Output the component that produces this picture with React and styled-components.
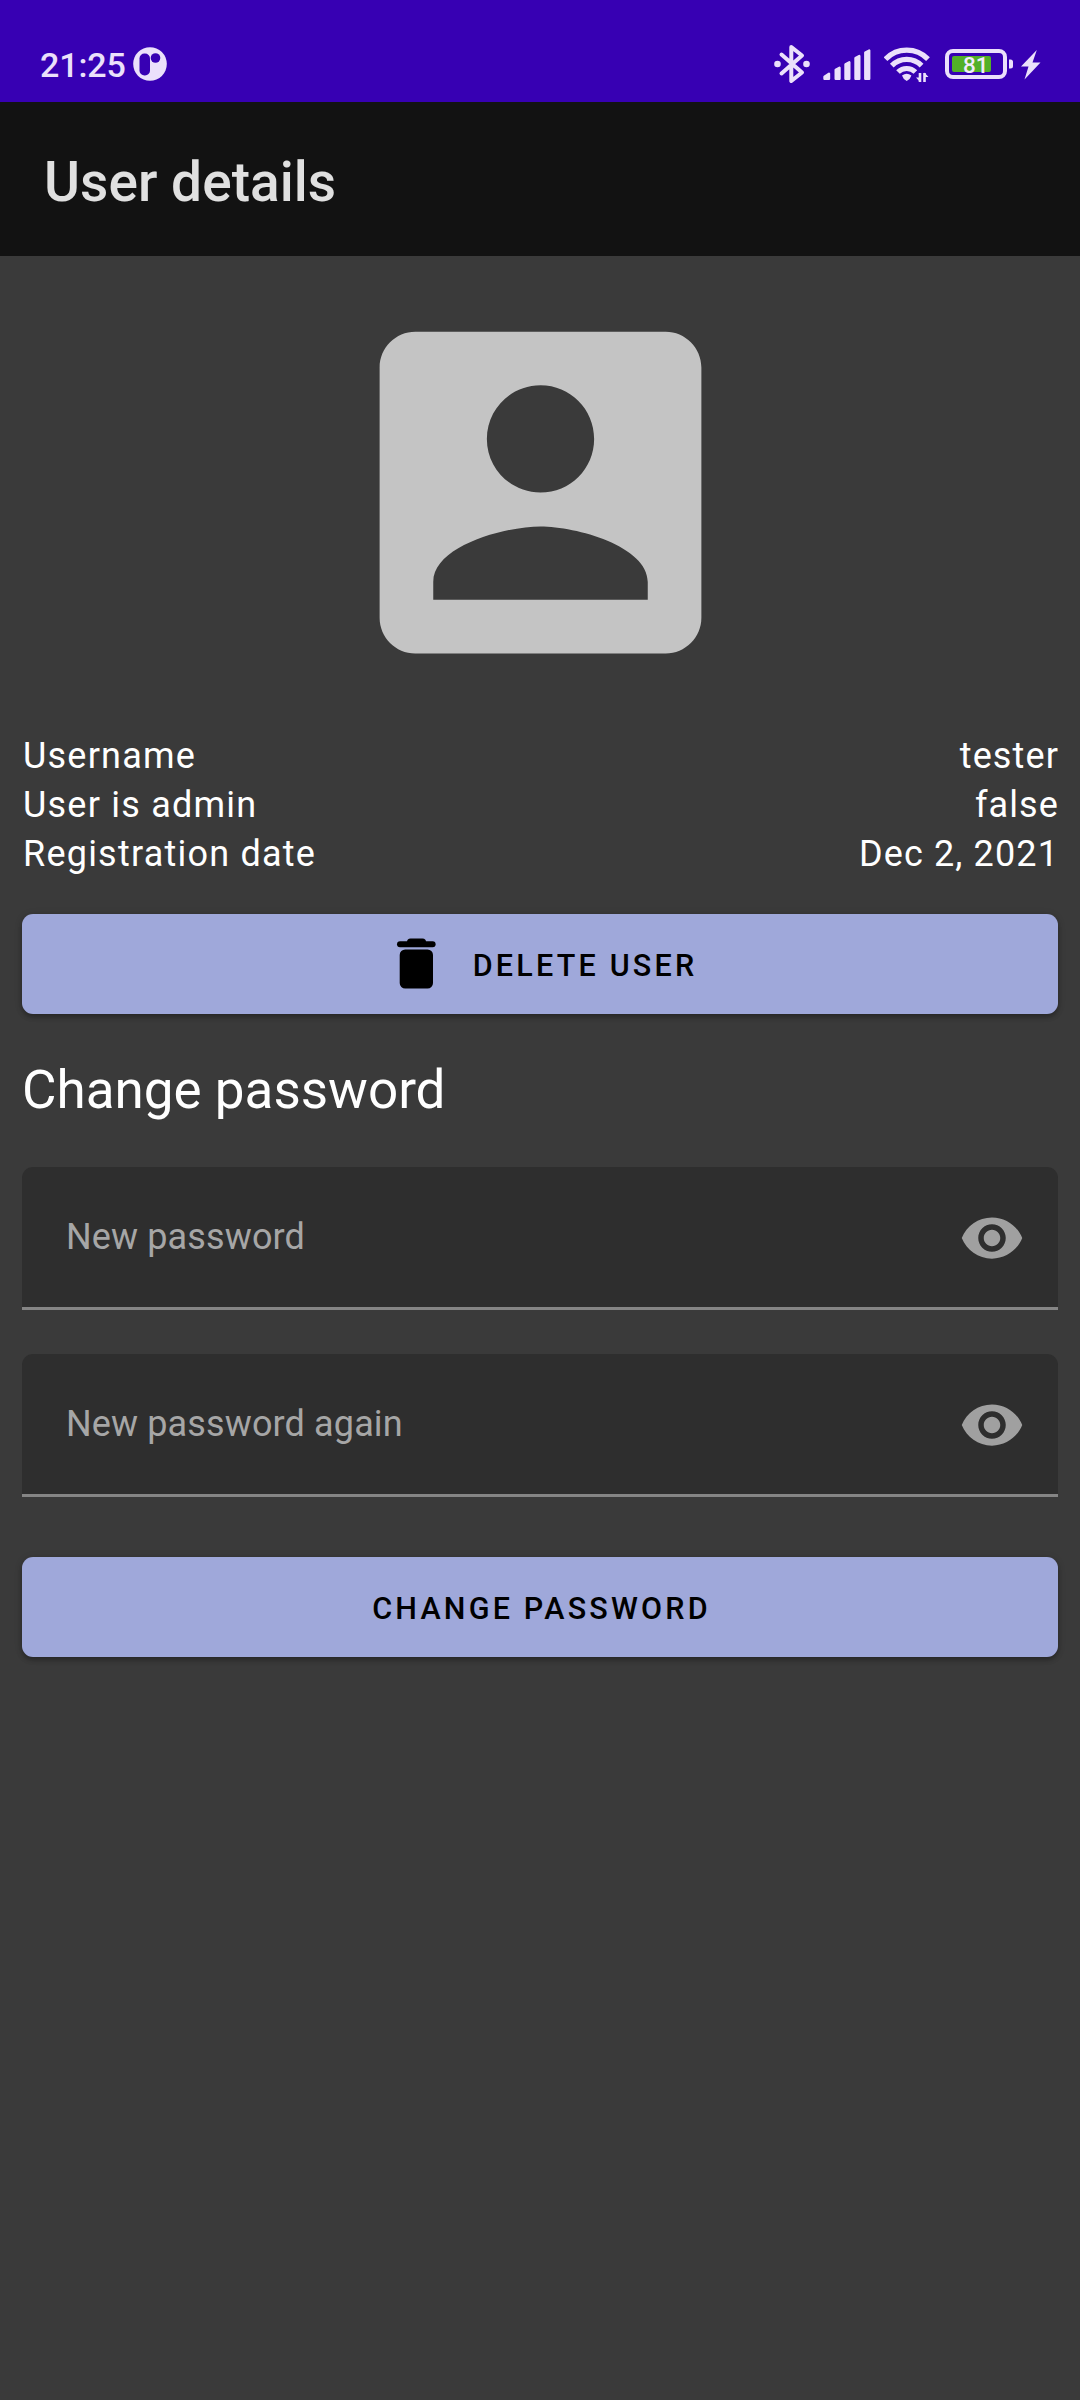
import React from "react";
import styled, { createGlobalStyle } from "styled-components";

const GlobalStyle = createGlobalStyle`
  *, *::before, *::after { box-sizing: border-box; }
  body {
    margin: 0;
    background: #3a3a3a;
    font-family: Roboto, "Noto Sans", sans-serif;
    color: #fff;
  }
  svg { display: block; flex: none; }
`;

const Screen = styled.div`
  display: flex;
  flex-direction: column;
  width: 1080px;
  min-height: 2400px;
  background: #3a3a3a;
`;

const StatusBar = styled.header`
  display: flex;
  justify-content: space-between;
  height: 102px;
  padding: 44px 39px 0 40px;
  background: #3700b3;
  color: #ebe0fb;
`;

const StatusGroup = styled.div`
  display: flex;
  align-items: center;
  height: 40px;
  gap: ${(p) => p.$gap}px;
`;

const PowerGroup = styled(StatusGroup)`
  margin-left: 2px;
`;

const Clock = styled.span`
  width: 85px;
  padding-top: 2px;
  font-size: 34px;
  font-weight: 500;
  line-height: 40px;
  letter-spacing: -0.1px;
  white-space: nowrap;
`;

const AppBar = styled.div`
  display: flex;
  align-items: center;
  height: 154px;
  padding: 6px 44px 0;
  background: #121212;
`;

const Title = styled.h1`
  margin: 0;
  font-size: 55px;
  font-weight: 500;
  line-height: 64px;
  letter-spacing: 0.05px;
  color: #e0e0e0;
`;

const Content = styled.main`
  display: flex;
  flex-direction: column;
  padding: 22px;
`;

const Avatar = styled.div`
  display: flex;
  justify-content: center;
  padding-left: 1px;
  height: 429px;
`;

const Details = styled.dl`
  display: flex;
  flex-direction: column;
  margin: 25px 0 0 1px;
`;

const DetailRow = styled.div`
  display: flex;
  justify-content: space-between;
  height: 49px;
  font-size: 36px;
  line-height: 49px;
`;

const Label = styled.dt`
  letter-spacing: 1.22px;
`;

const Value = styled.dd`
  margin: 0 -1px 0 0;
  letter-spacing: 1.12px;
`;

const Button = styled.button`
  display: flex;
  align-items: center;
  justify-content: center;
  gap: 21px;
  height: 100px;
  margin: ${(p) => p.$top}px 0 0;
  padding: 3px 0 0;
  border: 0;
  border-radius: 11px;
  background: #9fa8da;
  box-shadow: 0 3px 5px rgba(0, 0, 0, 0.28), 0 1px 8px rgba(0, 0, 0, 0.1);
  color: #000;
  font-family: inherit;
  font-size: 30.5px;
  font-weight: 500;
  line-height: 40px;
  letter-spacing: 3.2px;
  text-transform: uppercase;
`;

const ButtonLabel = styled.span`
  margin-left: 3px;
`;

const Heading = styled.h2`
  margin: 44px 0 0;
  font-size: 53px;
  font-weight: 400;
  line-height: 64px;
`;

const Field = styled.div`
  display: flex;
  align-items: center;
  justify-content: space-between;
  height: 143px;
  margin-top: ${(p) => p.$top}px;
  padding: 0 33px 0 44px;
  border-bottom: 3px solid #858585;
  border-radius: 11px 11px 0 0;
  background: #2e2e2e;
`;

const Hint = styled.span`
  font-size: 36px;
  line-height: 44px;
  letter-spacing: 0.13px;
  color: #a6a6a6;
`;

const Eye = styled.svg`
  margin-top: 2px;
`;

const BatteryText = styled.text`
  font-family: Roboto, sans-serif;
  font-size: 22.5px;
  font-weight: 500;
`;

function AppBadge() {
  return (
    <svg width="34" height="34" viewBox="0 0 34 34">
      <circle cx="17" cy="17" r="16.8" fill="#ebe0fb" />
      <rect x="6.5" y="6.5" width="10.5" height="22" rx="5" fill="#3700b3" />
      <circle cx="22.5" cy="11" r="4.8" fill="#3700b3" />
    </svg>
  );
}

function BluetoothIcon() {
  return (
    <svg width="36" height="40" viewBox="774 44 36 40" fill="none" stroke="#ebe0fb" strokeWidth="4" strokeLinecap="round" strokeLinejoin="round">
      <path d="M781.5 54.5 802 72.5 791.3 81V47L802 55.5 781.5 73.5" />
      <circle cx="777.5" cy="64" r="3.3" fill="#ebe0fb" stroke="none" />
      <circle cx="806.5" cy="64" r="3.3" fill="#ebe0fb" stroke="none" />
    </svg>
  );
}

function SignalIcon() {
  return (
    <svg width="48" height="40" viewBox="823 44 48 40" fill="#ebe0fb" stroke="#ebe0fb" strokeWidth="2.4" strokeLinejoin="round">
      <path d="M824.5 76.8 829 73.7V78.8H824.5ZM835.7 69.7 839.5 67.7V78.800H835.7ZM845.5 64.2 849.3 62.3V78.8H845.5ZM855.500 58 859.3 56V78.8H855.5ZM865.3 52.5 869.2 50.5V78.8H865.3Z" />
    </svg>
  );
}

function WifiIcon() {
  return (
    <svg width="46" height="40" viewBox="884 44 46 40" fill="none" stroke="#ebe0fb" strokeWidth="5.2">
      <path d="M885.5 59.1A29.5 29.5 0 0 1 928 59.1M891.8 65.6A20.8 20.8 0 0 1 921.6 65.6M898 72A12.5 12.5 0 0 1 915.4 72" />
      <path d="M902 75.5Q906.7 72 911.4 75.5Q910.5 79 906.7 81Q903 79 902 75.5Z" fill="#ebe0fb" stroke="none" />
      <path d="M920 82V73M924.5 73V82" strokeWidth="2.6" />
      <path d="M916 77.5H920V82ZM928.5 77H924.3V72.5Z" fill="#ebe0fb" stroke="none" />
    </svg>
  );
}

function BatteryIcon() {
  return (
    <svg width="69" height="40" viewBox="945 44 69 40">
      <rect x="947" y="51" width="58" height="26" rx="6" fill="none" stroke="#ebe0fb" strokeWidth="4" />
      <rect x="952" y="56" width="39" height="16" rx="2" fill="#52b028" />
      <path d="M1009 59.500h1.500q2.500 0 2.500 2.500v4q0 2.500-2.500 2.500H1009Z" fill="#ebe0fb" />
      <BatteryText x="963" y="72.7" fill="#f2ebfd">81</BatteryText>
    </svg>
  );
}

function BoltIcon() {
  return (
    <svg width="20" height="40" viewBox="1021 44 20 40" fill="#ebe0fb">
      <path d="M1036.8 50 1021 66.5H1028.5L1024.5 79.5 1040.5 62.5H1032.5Z" />
    </svg>
  );
}

function AccountIcon() {
  return (
    <svg width="429" height="429" viewBox="0 0 24 24" fill="#c4c4c4">
      <path d="M3 5v14c0 1.1.89 2 2 2h14c1.1 0 2-.9 2-2V5c0-1.1-.9-2-2-2H5c-1.11 0-2 .9-2 2zm12 4c0 1.66-1.34 3-3 3s-3-1.34-3-3 1.34-3 3-3 3 1.34 3 3zm-9 8c0-2 4-3.1 6-3.1s6 1.1 6 3.1v1H6v-1z" />
    </svg>
  );
}

function TrashIcon() {
  return (
    <svg width="66" height="66" viewBox="0 0 66 66" fill="#000">
      <rect x="24" y="5.5" width="19" height="8" rx="3.5" />
      <rect x="14" y="8.2" width="38.6" height="6" rx="3" />
      <rect x="16.7" y="16.5" width="33.3" height="39" rx="5.5" />
    </svg>
  );
}

function EyeIcon() {
  return (
    <Eye width="66" height="66" viewBox="0 0 24 24" fill="#a0a0a0">
      <path d="M12 4.5C7 4.5 2.73 7.61 1 12c1.73 4.39 6 7.5 11 7.5s9.27-3.11 11-7.5c-1.73-4.39-6-7.5-11-7.5zM12 17c-2.76 0-5-2.24-5-5s2.24-5 5-5 5 2.24 5 5-2.24 5-5 5zm0-8c-1.66 0-3 1.34-3 3s1.34 3 3 3 3-1.34 3-3-1.34-3-3-3z" />
    </Eye>
  );
}

const details = [
  ["Username", "tester"],
  ["User is admin", "false"],
  ["Registration date", "Dec 2, 2021"],
];

export default function App() {
  return (
    <>
      <GlobalStyle />
      <Screen>
        <StatusBar>
          <StatusGroup $gap={8}>
            <Clock>21:25</Clock>
            <AppBadge />
          </StatusGroup>
          <StatusGroup $gap={13}>
            <BluetoothIcon />
            <SignalIcon />
            <WifiIcon />
            <PowerGroup $gap={7}>
              <BatteryIcon />
              <BoltIcon />
            </PowerGroup>
          </StatusGroup>
        </StatusBar>
        <AppBar>
          <Title>User details</Title>
        </AppBar>
        <Content>
          <Avatar>
            <AccountIcon />
          </Avatar>
          <Details>
            {details.map(([label, value]) => (
              <DetailRow key={label}>
                <Label>{label}</Label>
                <Value>{value}</Value>
              </DetailRow>
            ))}
          </Details>
          <Button type="button" $top={35}>
            <TrashIcon />
            <ButtonLabel>Delete user</ButtonLabel>
          </Button>
          <Heading>Change password</Heading>
          <Field $top={45}>
            <Hint>New password</Hint>
            <EyeIcon />
          </Field>
          <Field $top={44}>
            <Hint>New password again</Hint>
            <EyeIcon />
          </Field>
          <Button type="button" $top={60}>
            <ButtonLabel>Change password</ButtonLabel>
          </Button>
        </Content>
      </Screen>
    </>
  );
}
